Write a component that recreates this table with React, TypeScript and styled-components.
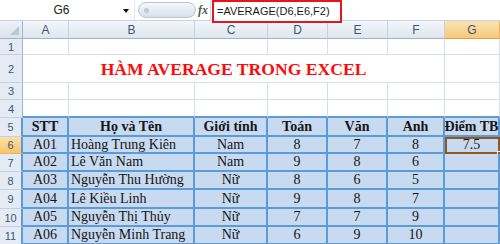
import React from 'react';
import styled, { createGlobalStyle, css } from 'styled-components';

const COLS = [23, 46, 126, 73, 60, 60, 57, 55];
const ROW_H = [16, 28, 17, 18, 19, 17, 18, 18, 19, 18, 18];
const LETTERS = ['A', 'B', 'C', 'D', 'E', 'F', 'G'];

const HEAD = ['STT', 'Họ và Tên', 'Giới tính', 'Toán', 'Văn', 'Anh', 'Điểm TB'];
const DATA = [
  ['A01', 'Hoàng Trung Kiên', 'Nam', '8', '7', '8', '7.5'],
  ['A02', 'Lê Văn Nam', 'Nam', '9', '8', '6', ''],
  ['A03', 'Nguyễn Thu Hường', 'Nữ', '8', '6', '5', ''],
  ['A04', 'Lê Kiều Linh', 'Nữ', '9', '8', '7', ''],
  ['A05', 'Nguyễn Thị Thủy', 'Nữ', '7', '7', '9', ''],
  ['A06', 'Nguyễn Minh Trang', 'Nữ', '6', '9', '10', ''],
];

export default function App() {
  return (
    <>
      <GlobalStyle />
      <Window>
        <FormulaBar>
          <NameBox>
            <NameText>G6</NameText>
            <DropArrow />
          </NameBox>
          <Pill>
            <PillDot />
          </Pill>
          <FxLabel>fx</FxLabel>
          <FormulaInput>
            <Formula>=AVERAGE(D6,E6,F2)</Formula>
          </FormulaInput>
        </FormulaBar>
        <Sheet>
          <Corner>
            <CornerMark />
          </Corner>
          {LETTERS.map((l) => (
            <ColHead key={l} $active={l === 'G'}>
              {l}
            </ColHead>
          ))}
          {ROW_H.map((_, i) => {
            const r = i + 1;
            const inTable = r >= 5;
            return (
              <React.Fragment key={r}>
                <RowHead $active={r === 6} $edge={inTable}>
                  {r}
                </RowHead>
                {r === 2 ? (
                  <>
                    <Title>HÀM AVERAGE TRONG EXCEL</Title>
                    <Cell />
                  </>
                ) : r < 5 ? (
                  LETTERS.map((l) => <Cell key={l} $edge={r === 4} />)
                ) : (
                  (r === 5 ? HEAD : DATA[r - 6]).map((v, c) => (
                    <TableCell
                      key={c}
                      $bold={r === 5}
                      $left={c === 1 && r > 5}
                      $selected={r === 6 && c === 6}
                    >
                      {v}
                      {r === 6 && c === 6 && <FillHandle />}
                    </TableCell>
                  ))
                )}
              </React.Fragment>
            );
          })}
        </Sheet>
      </Window>
    </>
  );
}

const GlobalStyle = createGlobalStyle`
  html, body {
    margin: 0;
    padding: 0;
    background: #fff;
  }
  * {
    box-sizing: border-box;
  }
`;

const Window = styled.div`
  width: 500px;
  height: 244px;
  overflow: hidden;
  display: flex;
  flex-direction: column;
  font-family: 'Liberation Sans', Arial, sans-serif;
`;

const FormulaBar = styled.div`
  height: 21px;
  display: flex;
  align-items: flex-start;
  background: #fff;
  border-bottom: 1px solid #c9d4e2;
  position: relative;
  z-index: 2;
`;

const NameBox = styled.div`
  width: 135px;
  height: 20px;
  display: flex;
  align-items: center;
  border-right: 1px solid #e3e8ef;
`;

const NameText = styled.span`
  flex: 1;
  text-align: center;
  font-size: 12px;
  color: #222;
`;

const DropArrow = styled.span`
  width: 0;
  height: 0;
  margin: 1px 5px 0 0;
  border-left: 3px solid transparent;
  border-right: 3px solid transparent;
  border-top: 4px solid #111;
`;

const Pill = styled.div`
  width: 58px;
  height: 16px;
  margin: 2px 0 0 3px;
  border-radius: 8px;
  border: 1px solid #b9c6d6;
  background: linear-gradient(#f5f8fb, #d8e1ec);
  display: flex;
  align-items: center;
  padding-left: 5px;
`;

const PillDot = styled.span`
  width: 5px;
  height: 5px;
  border-radius: 50%;
  background: #c2c9d2;
`;

const FxLabel = styled.span`
  width: 12px;
  margin: 3px 0 0 2px;
  font-family: 'Liberation Serif', serif;
  font-style: italic;
  font-weight: bold;
  font-size: 12px;
  color: #555;
`;

const FormulaInput = styled.div`
  flex: 1;
  height: 21px;
  padding-left: 1px;
  border-left: 1px solid #d5dce6;
`;

const Formula = styled.div`
  width: 130px;
  height: 23px;
  border: 2px solid #e3161d;
  background: #fff;
  font-size: 11px;
  color: #1a1a1a;
  padding: 3px 0 0 3px;
`;

const Sheet = styled.div`
  display: grid;
  grid-template-columns: ${COLS.map((w) => w + 'px').join(' ')};
  grid-template-rows: 18px ${ROW_H.map((h) => h + 'px').join(' ')};
`;

const headFont = css`
  font-family: 'Liberation Sans', Arial, sans-serif;
  font-size: 11px;
  color: #3f5574;
  display: flex;
  align-items: center;
  justify-content: center;
`;

const Corner = styled.div`
  background: linear-gradient(#eef2f8, #dbe3ee);
  border-right: 1px solid #9fb3cb;
  border-bottom: 1px solid #9fb3cb;
  position: relative;
`;

const CornerMark = styled.span`
  position: absolute;
  right: 3px;
  bottom: 3px;
  width: 0;
  height: 0;
  border-left: 9px solid transparent;
  border-bottom: 9px solid #b9c7d9;
`;

const ColHead = styled.div<{ $active?: boolean }>`
  ${headFont};
  font-size: 12px;
  background: ${(p) =>
    p.$active ? 'linear-gradient(#fbe3b4, #f6c97a)' : 'linear-gradient(#f3f6fa, #dfe6ef)'};
  border-right: 1px solid ${(p) => (p.$active ? '#f0b45e' : '#c5d1df')};
  border-bottom: 1px solid ${(p) => (p.$active ? '#f29b3d' : '#9fb3cb')};
`;

const RowHead = styled.div<{ $active?: boolean; $edge?: boolean }>`
  ${headFont};
  background: ${(p) => (p.$active ? 'linear-gradient(#fbe0a8, #f6c46c)' : '#e4ebf5')};
  border-bottom: 1px solid ${(p) => (p.$active ? '#f0b45e' : '#c5d1df')};
  border-right: ${(p) => (p.$edge ? '2px solid #5b9bd8' : '1px solid #9fb3cb')};
`;

const Cell = styled.div<{ $edge?: boolean }>`
  background: #fff;
  border-right: 1px solid #d8dfea;
  border-bottom: ${(p) => (p.$edge ? '2px solid #5b9bd8' : '1px solid #d8dfea')};
`;

const Title = styled.div`
  grid-column: span 6;
  display: flex;
  align-items: center;
  justify-content: center;
  background: #fff;
  border-right: 1px solid #d8dfea;
  border-bottom: 1px solid #d8dfea;
  font-family: 'Liberation Serif', 'Times New Roman', serif;
  font-weight: bold;
  font-size: 17.6px;
  color: #ff0a0a;
  padding-top: 1px;
`;

const TableCell = styled.div<{ $bold?: boolean; $left?: boolean; $selected?: boolean }>`
  position: relative;
  display: flex;
  align-items: center;
  justify-content: ${(p) => (p.$left ? 'flex-start' : 'center')};
  padding-left: ${(p) => (p.$left ? '2px' : '0')};
  background: #c8daf0;
  border-right: 2px solid #5b9bd8;
  border-bottom: 2px solid #5b9bd8;
  font-family: 'Liberation Serif', 'Times New Roman', serif;
  font-size: 14px;
  font-weight: ${(p) => (p.$bold ? 'bold' : 'normal')};
  color: #151515;
  white-space: nowrap;
  ${(p) =>
    p.$selected &&
    css`
      outline: 2px solid #93561f;
      outline-offset: -2px;
    `}
`;

const FillHandle = styled.span`
  position: absolute;
  right: -4px;
  bottom: -4px;
  width: 5px;
  height: 5px;
  background: #93561f;
  border: 1px solid #fff;
`;
